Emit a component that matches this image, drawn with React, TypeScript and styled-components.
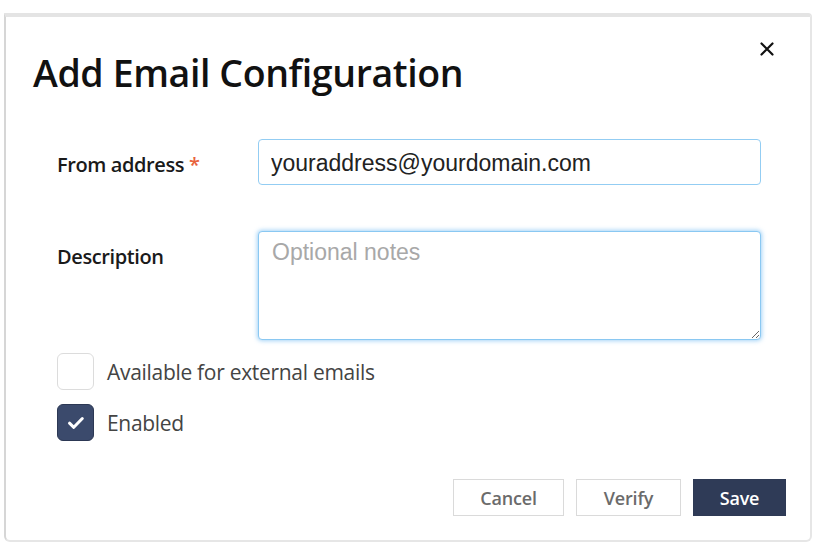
import * as React from "react";
import styled, { createGlobalStyle } from "styled-components";

const GlobalStyle = createGlobalStyle`
  html, body {
    margin: 0;
    padding: 0;
    background: #ffffff;
  }
  body {
    font-family: "Open Sans", "Noto Sans", sans-serif;
  }
`;

const Page = styled.div`
  width: 825px;
  height: 554px;
  padding: 13px 0 0 4px;
  box-sizing: border-box;
`;

const Dialog = styled.div`
  position: relative;
  width: 808px;
  height: 529px;
  box-sizing: border-box;
  background: #fff;
  border-top: 4px solid #e4e4e4;
  border-left: 2px solid #d6d6d6;
  border-right: 2px solid #e6e6e6;
  border-bottom: 2px solid #e6e6e6;
  border-radius: 0 4px 6px 6px;
  display: flex;
  flex-direction: column;
`;

const Title = styled.h1`
  margin: 32px 0 0 27px;
  font-family: "Open Sans", sans-serif;
  font-weight: 600;
  font-size: 37.5px;
  line-height: 48px;
  letter-spacing: -0.4px;
  color: #111;
`;

const CloseButton = styled.button`
  position: absolute;
  top: 24px;
  right: 35px;
  width: 16px;
  height: 16px;
  padding: 0;
  border: none;
  background: none;
  cursor: pointer;
  svg {
    display: block;
  }
`;

const Form = styled.div`
  display: grid;
  grid-template-columns: 201px 503px;
  row-gap: 43px;
  align-items: start;
  margin: 42px 0 0 51px;
`;

const Label = styled.label`
  padding-top: 3px;
  line-height: 46px;
  font-family: "Open Sans", sans-serif;
  font-weight: 600;
  font-size: 20px;
  color: #1a1a1a;
  letter-spacing: -0.4px;
`;

const Required = styled.span`
  color: #e8623c;
  margin-left: 5px;
`;

const TextInput = styled.input`
  height: 46px;
  box-sizing: border-box;
  border: 1px solid #93cdf3;
  border-radius: 4px;
  padding: 2px 12px 0;
  font-family: "Liberation Sans", Arial, sans-serif;
  font-size: 23px;
  color: #222;
  outline: none;
`;

const TextArea = styled.textarea`
  height: 109px;
  box-sizing: border-box;
  border: 1px solid #8ac8f2;
  border-radius: 4px;
  padding: 7px 13px;
  font-family: "Liberation Sans", Arial, sans-serif;
  font-size: 23px;
  color: #222;
  outline: none;
  box-shadow: 0 0 4px 1px rgba(90, 175, 240, 0.55);
  resize: vertical;
  caret-color: #111;
  &::placeholder {
    color: #a8a8a8;
  }
`;

const Checks = styled.div`
  display: flex;
  flex-direction: column;
  gap: 14px;
  margin: 13px 0 0 51px;
`;

const CheckRow = styled.label`
  display: flex;
  align-items: center;
  gap: 13px;
  font-family: "Open Sans", sans-serif;
  font-size: 21px;
  color: #444;
  letter-spacing: -0.3px;
`;

const Box = styled.span<{ $checked?: boolean }>`
  width: 37px;
  height: 37px;
  box-sizing: border-box;
  border-radius: 6px;
  border: 1px solid ${(p) => (p.$checked ? "#2c3854" : "#dcdcdc")};
  background: ${(p) => (p.$checked ? "#3b4a6c" : "#fff")};
  display: flex;
  align-items: center;
  justify-content: center;
`;

const Footer = styled.div`
  display: flex;
  justify-content: flex-end;
  gap: 12px;
  margin: 38px 24px 0 0;
`;

const Button = styled.button<{ $primary?: boolean; $w: number }>`
  width: ${(p) => p.$w}px;
  height: 37px;
  box-sizing: border-box;
  border: 1px solid ${(p) => (p.$primary ? "#2e3a55" : "#dadada")};
  background: ${(p) => (p.$primary ? "#2f3b57" : "#fff")};
  color: ${(p) => (p.$primary ? "#fff" : "#6b6b6b")};
  font-family: "Open Sans", sans-serif;
  font-weight: 600;
  font-size: 18px;
  letter-spacing: -0.2px;
  padding: 0;
  cursor: pointer;
`;

function Check() {
  return (
    <svg width="18" height="14" viewBox="0 0 18 14" fill="none">
      <path d="M2.5 7.2l4.3 4.1 8.5-8.8" stroke="#fff" strokeWidth="3" strokeLinecap="round" strokeLinejoin="round" />
    </svg>
  );
}

export default function App() {
  return (
    <>
      <GlobalStyle />
      <Page>
        <Dialog>
          <CloseButton aria-label="Close">
            <svg width="16" height="16" viewBox="0 0 16 16">
              <path d="M2.5 2.5l11 11M13.5 2.5l-11 11" stroke="#111" strokeWidth="2.2" strokeLinecap="round" />
            </svg>
          </CloseButton>
          <Title>Add Email Configuration</Title>
          <Form>
            <Label>
              From address<Required>*</Required>
            </Label>
            <TextInput defaultValue="youraddress@yourdomain.com" />
            <Label>Description</Label>
            <TextArea placeholder="Optional notes" />
          </Form>
          <Checks>
            <CheckRow>
              <Box />
              Available for external emails
            </CheckRow>
            <CheckRow>
              <Box $checked>
                <Check />
              </Box>
              Enabled
            </CheckRow>
          </Checks>
          <Footer>
            <Button $w={111}>Cancel</Button>
            <Button $w={105}>Verify</Button>
            <Button $w={93} $primary>
              Save
            </Button>
          </Footer>
        </Dialog>
      </Page>
    </>
  );
}
